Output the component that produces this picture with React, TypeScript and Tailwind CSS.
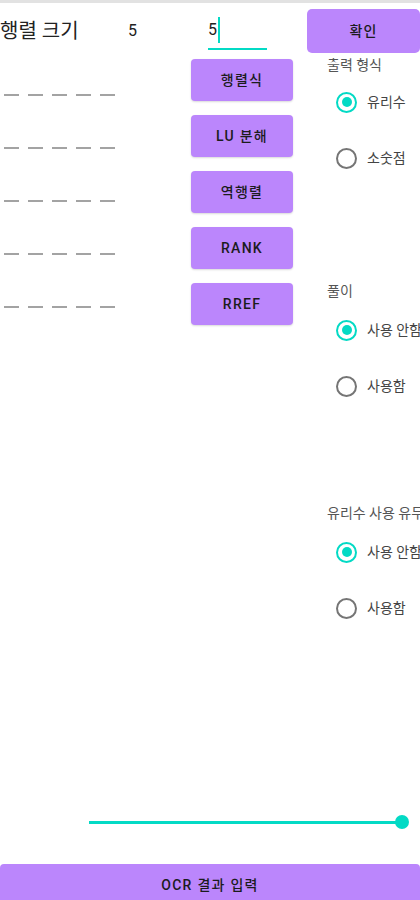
import React from "react";

const font = { fontFamily: '"Roboto", "Noto Sans CJK KR", sans-serif' };

const actions = ["행렬식", "LU 분해", "역행렬", "RANK", "RREF"];

function Dashes() {
  return (
    <div className="flex h-[53px] items-center gap-[9px] pl-[4px]">
      {[0, 1, 2, 3, 4].map((i) => (
        <div key={i} className="h-[2px] w-[15px] bg-[#a3a3a3]" />
      ))}
    </div>
  );
}

function Radio({ label, checked }: { label: string; checked?: boolean }) {
  return (
    <div className="flex h-[56px] items-center gap-[10px] pl-[43px] whitespace-nowrap">
      <div
        className={
          "flex h-[21px] w-[21px] shrink-0 items-center justify-center rounded-full border-2 " +
          (checked ? "border-[#03dac5]" : "border-[#757575]")
        }
      >
        {checked && <div className="h-[10px] w-[10px] rounded-full bg-[#03dac5]" />}
      </div>
      <span className="text-[14px] text-[#444]">{label}</span>
    </div>
  );
}

function GroupLabel({ text, className }: { text: string; className: string }) {
  return (
    <div className={"pl-[34px] text-[14px] leading-[12px] whitespace-nowrap text-[#555] " + className}>
      {text}
    </div>
  );
}

export default function App() {
  return (
    <div className="flex h-[900px] w-[420px] flex-col overflow-hidden bg-white" style={font}>
      <div className="h-[3px] shrink-0 bg-[#e2e2e2]" />

      {/* header */}
      <div className="flex h-[56px] shrink-0 items-center">
        <span className="w-[128px] text-[20px] leading-none text-[#222]">행렬 크기</span>
        <span className="w-[80px] text-[16px] leading-none text-[#222]">5</span>
        <div className="flex h-[38px] w-[59px] items-center border-b-2 border-[#03dac5]">
          <span className="text-[16px] leading-none text-[#222]">5</span>
          <div className="ml-[1px] h-[26px] w-[2px] bg-[#03dac5]" />
        </div>
        <button className="ml-[40px] h-[44px] w-[113px] rounded-[5px] bg-[#bb86fc] text-[14px] font-medium tracking-[0.08em] text-[#1c1c1c]">
          확인
        </button>
      </div>

      {/* body */}
      <div className="flex h-[577px] shrink-0">
        <div className="w-[191px] shrink-0 pt-[9px]">
          {[0, 1, 2, 3, 4].map((i) => (
            <Dashes key={i} />
          ))}
        </div>
        <div className="flex w-[102px] shrink-0 flex-col gap-[14px]">
          {actions.map((a) => (
            <button
              key={a}
              className="h-[42px] shrink-0 rounded-[4px] bg-[#bb86fc] text-[14px] font-medium tracking-[0.09em] text-[#1c1c1c] shadow-[0_1px_2px_rgba(0,0,0,0.15)]"
            >
              {a}
            </button>
          ))}
        </div>
        <div className="min-w-0 flex-1">
          <GroupLabel text="출력 형식" className="" />
          <div className="mt-[3px]">
            <Radio label="유리수" checked />
            <Radio label="소숫점" />
          </div>
          <GroupLabel text="풀이" className="mt-[99px]" />
          <div className="mt-[5px]">
            <Radio label="사용 안함" checked />
            <Radio label="사용함" />
          </div>
          <GroupLabel text="유리수 사용 유무" className="mt-[93px]" />
          <div className="mt-[5px]">
            <Radio label="사용 안함" checked />
            <Radio label="사용함" />
          </div>
        </div>
      </div>

      {/* slider */}
      <div className="mt-[179px] flex h-[14px] shrink-0 items-center pl-[89px]">
        <div className="h-[3px] w-[313px] bg-[#03dac5]" />
        <div className="-ml-[7px] h-[14px] w-[14px] rounded-full bg-[#03dac5]" />
      </div>

      <button className="mt-[35px] h-[42px] w-full shrink-0 rounded-[4px] bg-[#bb86fc] text-[14px] font-medium tracking-[0.09em] text-[#1c1c1c]">
        OCR 결과 입력
      </button>
    </div>
  );
}
